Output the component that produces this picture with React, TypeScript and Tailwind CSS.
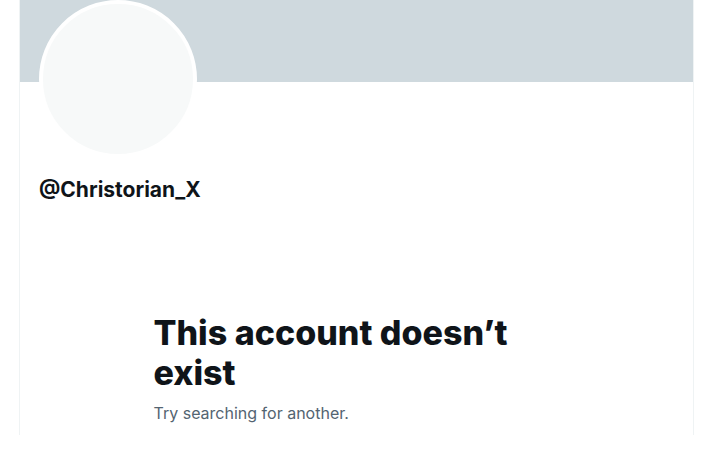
export default function App() {
  return (
    <div className="w-[712px] h-[458px] bg-white overflow-hidden" style={{ fontFamily: 'Inter, "Noto Sans", sans-serif' }}>
      <div className="ml-[19px] w-[675px] h-[435px] border-x border-[#eff3f4] flex flex-col">
        <div className="h-[82px] bg-[#cfd9de] shrink-0" />
        <div className="pl-[19px]">
          <div className="-mt-[82px] w-[158px] h-[158px] rounded-full border-4 border-white bg-[#f7f9f9]" />
          <div className="mt-[20px] text-[21px] leading-[24px] font-bold text-[#0f1419]">@Christorian_X</div>
        </div>
        <div className="mt-[111px] w-[406px] mx-auto">
          <div className="text-[34px] leading-[40px] font-extrabold text-[#0f1419]">This account doesn’t exist</div>
          <div className="mt-[10px] text-[16px] leading-[20px] text-[#536471]">Try searching for another.</div>
        </div>
      </div>
    </div>
  );
}
